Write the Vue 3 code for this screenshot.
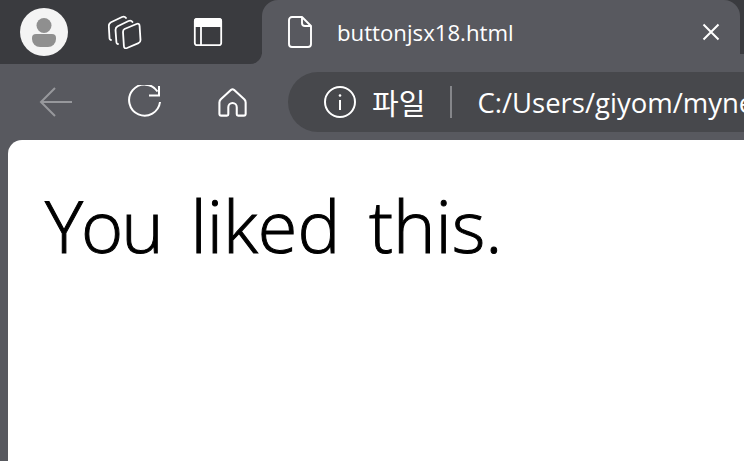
<template>
  <div class="browser">
    <!-- tab strip -->
    <div class="tabstrip">
      <div class="strip-left">
        <svg class="avatar" width="48" height="48" viewBox="0 0 48 48">
          <circle cx="24" cy="24" r="24" fill="#f4f4f4" />
          <circle cx="24" cy="17.500" r="7.500" fill="#8f8f8f" />
          <path d="M16 26h16a4 4 0 0 1 4 4v1a8 8 0 0 1-8 8h-8a8 8 0 0 1-8-8v-1a4 4 0 0 1 4-4z" fill="#8f8f8f" />
        </svg>
        <button class="strip-btn first">
          <svg width="34" height="34" viewBox="0 0 34 34" fill="none" stroke="#fff" stroke-width="1.800" stroke-linecap="round" stroke-linejoin="round">
            <path d="M3 25c-1 0-1.500-1-1.500-2l-.700-12c0-2 .700-3 2.200-3.800l11-5.200c1.500-.700 3-.500 4 1" />
            <path d="M10 29c-1 0-1.500-1-1.600-2l-.900-12c0-2 .700-3 2.200-3.800l10.800-5.200c1.500-.700 3-.500 4 1" />
            <path d="M16.500 14l12-5c2-.800 3 0 3.100 2l.900 14c0 1.500-.500 2.500-2 3.100l-11.500 4.900c-2 .800-3 0-3.100-2l-.900-14c0-1.500.300-2.400 1.500-3z" />
          </svg>
        </button>
        <button class="strip-btn">
          <svg width="30" height="30" viewBox="0 0 30 30">
            <path d="M4 1h22a3 3 0 0 1 3 3v6h-28v-6a3 3 0 0 1 3-3z" fill="#fff" />
            <path d="M4 1.800h22a2.200 2.200 0 0 1 2.200 2.200v22a2.200 2.200 0 0 1-2.200 2.200h-22a2.200 2.200 0 0 1-2.200-2.200v-22a2.200 2.200 0 0 1 2.200-2.200zM8 10v18" fill="none" stroke="#fff" stroke-width="1.800" />
          </svg>
        </button>
      </div>
      <div class="tab">
        <svg class="doc" width="26" height="34" viewBox="0 0 26 34" fill="none" stroke="#fff" stroke-width="1.900" stroke-linejoin="round">
          <path d="M15 2h-10a3 3 0 0 0-3 3v24a3 3 0 0 0 3 3h16a3 3 0 0 0 3-3v-18z" />
          <path d="M15 2v6a3 3 0 0 0 3 3h6" />
        </svg>
        <span class="title">buttonjsx18.html</span>
        <svg class="close" width="18" height="18" viewBox="0 0 18 18" stroke="#fff" stroke-width="2">
          <path d="M1.500 1.500l15 15M16.500 1.500l-15 15" />
        </svg>
      </div>
    </div>

    <!-- toolbar -->
    <div class="toolbar">
      <button class="nav back">
        <svg width="34" height="30" viewBox="0 0 34 30" fill="none" stroke="#97989c" stroke-width="2">
          <path d="M33 15h-31M16 1l-14 14l14 14" />
        </svg>
      </button>
      <button class="nav reload">
        <svg width="34" height="34" viewBox="0 0 34 34" fill="none" stroke="#fff" stroke-width="2">
          <path d="M29.500 6.500a15.500 15.500 0 1 0 2.500 10.500" />
          <path d="M31 1v9.500h-10" />
        </svg>
      </button>
      <button class="nav home">
        <svg width="30" height="31" viewBox="0 0 32 32" fill="none" stroke="#fff" stroke-width="2.200" stroke-linejoin="round">
          <path d="M14 2.500l-11 10c-1 1-1.500 2-1.500 3.500v12c0 1 .800 2 2 2h6c1 0 1.500-.700 1.500-1.500v-7.500a4.500 4.500 0 0 1 9 0v7.500c0 .800.500 1.500 1.500 1.500h6c1.200 0 2-1 2-2v-12c0-1.500-.500-2.500-1.500-3.500l-11-10c-1-.800-2-.800-3 0z" />
        </svg>
      </button>
      <div class="address">
        <svg class="info" width="32" height="32" viewBox="0 0 32 32" fill="none" stroke="#fff" stroke-width="2">
          <circle cx="16" cy="16" r="15" />
          <path d="M16 14v10" />
          <circle cx="16" cy="9.500" r="1.300" fill="#fff" stroke="none" />
        </svg>
        <span class="scheme">파일</span>
        <span class="divider"></span>
        <span class="url">C:/Users/giyom/myne</span>
      </div>
    </div>

    <!-- page -->
    <div class="page">
      <p class="liked"><span class="you">You</span> liked this.</p>
    </div>
  </div>
</template>

<script setup>
</script>

<style>
html, body {
  margin: 0;
  overflow: hidden;
}
</style>

<style scoped>
.browser {
  width: 744px;
  height: 461px;
  display: flex;
  flex-direction: column;
  overflow: hidden;
  background: #58595f;
  color: #fff;
  font-family: "Open Sans", "Noto Sans", "Noto Sans CJK KR", sans-serif;
}

button {
  padding: 0;
  border: none;
  background: none;
  display: flex;
}

/* ===== tabs ===== */
.tabstrip {
  height: 64px;
  flex: none;
  display: flex;
  background: linear-gradient(#3a3b3f 85%, #58595f 85%);
}

.strip-left {
  width: 262px;
  display: flex;
  align-items: center;
  padding-left: 20px;
  box-sizing: border-box;
  background: #3a3b3f;
  border-bottom-right-radius: 12px;
}

.avatar {
  display: block;
}

.strip-btn {
  margin-left: 51px;
}

.strip-btn.first {
  margin-left: 40px;
}

.tab {
  flex: 1;
  display: flex;
  align-items: center;
  margin-right: 4px;
  padding-left: 25px;
  background: #58595f;
  border-radius: 16px 16px 0 0;
}

.title {
  margin-left: 24px;
  font-size: 22.200px;
}

.close {
  margin-left: auto;
  margin-right: 20px;
}

/* ===== toolbar ===== */
.toolbar {
  height: 76px;
  flex: none;
  display: flex;
  align-items: center;
  padding-left: 39px;
  box-sizing: border-box;
}

.nav {
  width: 34px;
  justify-content: center;
}

.reload {
  margin-left: 55px;
}

.home {
  margin-left: 54px;
}

.address {
  margin-left: 38px;
  flex: 1;
  min-width: 0;
  height: 60px;
  margin-right: -300px;
  display: flex;
  align-items: center;
  padding-left: 36px;
  background: #47484c;
  border-radius: 30px;
  white-space: nowrap;
  overflow: hidden;
}

.scheme {
  margin-left: 16px;
  font-size: 29px;
}

.divider {
  width: 2px;
  height: 32px;
  margin-left: 25px;
  background: #85868a;
}

.url {
  margin-left: 25px;
  font-size: 27.500px;
}

/* ===== page ===== */
.page {
  flex: 1;
  margin-left: 8px;
  background: #fff;
  border-top-left-radius: 14px;
  color: #000;
}

.liked {
  margin: 0;
  padding: 35px 0 0 37px;
  font-size: 72px;
  font-weight: 300;
  line-height: 100px;
  word-spacing: 10px;
  -webkit-text-stroke: 1px #000;
}

.you {
  letter-spacing: -2px;
}
</style>
